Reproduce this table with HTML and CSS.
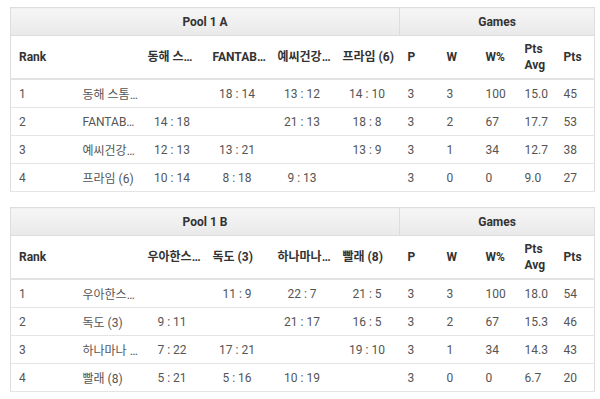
FILE: index.html
```html
<!DOCTYPE html>
<html>
<head>
<meta charset="utf-8">
<link rel="stylesheet" href="styles.css">
</head>
<body>
<div class="page">
<table class="pool">
  <colgroup>
    <col class="c-rank"><col class="c-name"><col class="c-opp"><col class="c-opp"><col class="c-opp"><col class="c-opp">
    <col class="c-stat"><col class="c-stat"><col class="c-stat"><col class="c-stat"><col class="c-stat">
  </colgroup>
  <thead>
    <tr class="group">
      <th colspan="6">Pool 1 A</th>
      <th colspan="5" class="games">Games</th>
    </tr>
    <tr class="heads">
      <th>Rank</th><th></th><th>동해 스…</th><th>FANTAB…</th><th>예씨건강…</th><th>프라임 (6)</th>
      <th>P</th><th>W</th><th>W%</th><th class="wrap">Pts Avg</th><th>Pts</th>
    </tr>
  </thead>
  <tbody>
    <tr><td>1</td><td>동해 스톰…</td><td class="sc"></td><td class="sc">18 : 14</td><td class="sc">13 : 12</td><td class="sc">14 : 10</td><td>3</td><td>3</td><td>100</td><td>15.0</td><td>45</td></tr>
    <tr><td>2</td><td>FANTAB…</td><td class="sc">14 : 18</td><td class="sc"></td><td class="sc">21 : 13</td><td class="sc">18 : 8</td><td>3</td><td>2</td><td>67</td><td>17.7</td><td>53</td></tr>
    <tr><td>3</td><td>예씨건강…</td><td class="sc">12 : 13</td><td class="sc">13 : 21</td><td class="sc"></td><td class="sc">13 : 9</td><td>3</td><td>1</td><td>34</td><td>12.7</td><td>38</td></tr>
    <tr><td>4</td><td>프라임 (6)</td><td class="sc">10 : 14</td><td class="sc">8 : 18</td><td class="sc">9 : 13</td><td class="sc"></td><td>3</td><td>0</td><td>0</td><td>9.0</td><td>27</td></tr>
  </tbody>
</table>

<table class="pool">
  <colgroup>
    <col class="c-rank"><col class="c-name"><col class="c-opp"><col class="c-opp"><col class="c-opp"><col class="c-opp">
    <col class="c-stat"><col class="c-stat"><col class="c-stat"><col class="c-stat"><col class="c-stat">
  </colgroup>
  <thead>
    <tr class="group">
      <th colspan="6">Pool 1 B</th>
      <th colspan="5" class="games">Games</th>
    </tr>
    <tr class="heads">
      <th>Rank</th><th></th><th>우아한스…</th><th>독도 (3)</th><th>하나마나…</th><th>빨래 (8)</th>
      <th>P</th><th>W</th><th>W%</th><th class="wrap">Pts Avg</th><th>Pts</th>
    </tr>
  </thead>
  <tbody>
    <tr><td>1</td><td>우아한스…</td><td class="sc"></td><td class="sc">11 : 9</td><td class="sc">22 : 7</td><td class="sc">21 : 5</td><td>3</td><td>3</td><td>100</td><td>18.0</td><td>54</td></tr>
    <tr><td>2</td><td>독도 (3)</td><td class="sc">9 : 11</td><td class="sc"></td><td class="sc">21 : 17</td><td class="sc">16 : 5</td><td>3</td><td>2</td><td>67</td><td>15.3</td><td>46</td></tr>
    <tr><td>3</td><td>하나마나 …</td><td class="sc">7 : 22</td><td class="sc">17 : 21</td><td class="sc"></td><td class="sc">19 : 10</td><td>3</td><td>1</td><td>34</td><td>14.3</td><td>43</td></tr>
    <tr><td>4</td><td>빨래 (8)</td><td class="sc">5 : 21</td><td class="sc">5 : 16</td><td class="sc">10 : 19</td><td class="sc"></td><td>3</td><td>0</td><td>0</td><td>6.7</td><td>20</td></tr>
  </tbody>
</table>
</div>
</body>
</html>
```

FILE: styles.css
```css
html, body {
  margin: 0;
  padding: 0;
  background: #ffffff;
}

body {
  font-family: Roboto, "Noto Sans CJK KR", "Liberation Sans", sans-serif;
  font-size: 12px;
  color: #555555;
}

.page {
  padding: 7px 6px 0 10px;
}

.pool {
  width: 585px;
  table-layout: fixed;
  border-collapse: collapse;
  border: 1px solid #dddddd;
  margin-bottom: 15px;
}

.c-rank { width: 64px; }
.c-name { width: 65px; }
.c-opp { width: 65px; }
.c-stat { width: 39px; }

.pool th,
.pool td {
  padding: 0 8px;
  white-space: nowrap;
  vertical-align: middle;
  text-align: left;
}

.group th {
  height: 27px;
  text-align: center;
  font-weight: 700;
  color: #333333;
  background: linear-gradient(#f6f6f6, #e9e9e9);
  border-bottom: 1px solid #dddddd;
}

.group th.games {
  border-left: 1px solid #dddddd;
}

.heads th {
  height: 42px;
  font-weight: 700;
  color: #333333;
  line-height: 16px;
  border-bottom: 2px solid #e2e2e2;
}

.heads th.wrap {
  white-space: normal;
}

.pool tbody td {
  height: 27px;
  border-bottom: 1px solid #e4e4e4;
}

.pool tbody td.sc {
  text-align: center;
}
```
